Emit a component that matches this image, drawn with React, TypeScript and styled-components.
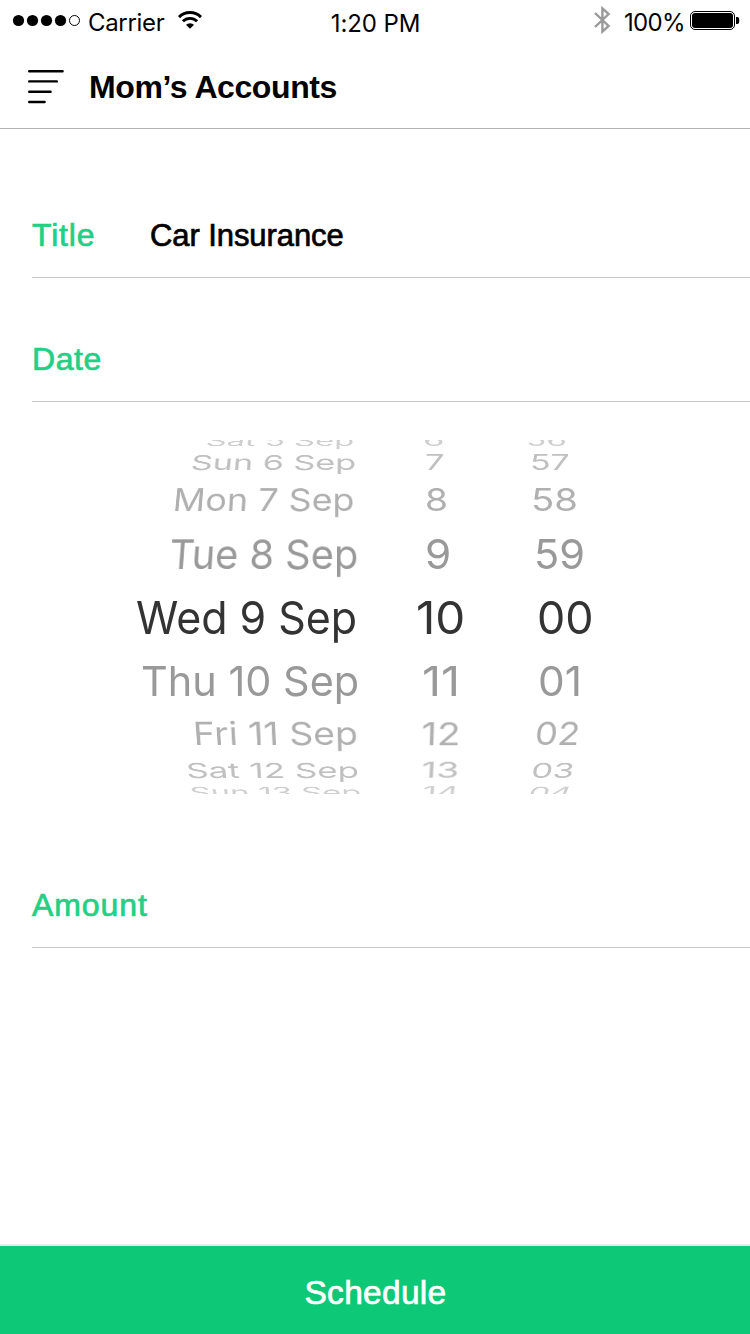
import React from "react";
import styled, { createGlobalStyle, css } from "styled-components";

const GlobalStyle = createGlobalStyle`
  * { box-sizing: border-box; }
  body { margin: 0; background: #fff; }
`;

const helvetica = css`font-family: "Liberation Sans", Helvetica, Arial, sans-serif;`;
const sanFrancisco = css`font-family: Inter, "Liberation Sans", sans-serif;`;

const Screen = styled.div`
  ${helvetica}
  display: flex;
  flex-direction: column;
  width: 750px;
  height: 1334px;
  overflow: hidden;
  background: #fff;
  color: #000;
`;

const StatusBar = styled.div`
  ${sanFrancisco}
  display: grid;
  grid-template-columns: 1fr auto 1fr;
  height: 46px;
  padding: 0 11px 0 12px;
  font-size: 24px;
  line-height: 30px;
`;

const StatusGroup = styled.div<{ $end?: boolean }>`
  display: flex;
  align-items: flex-start;
  justify-content: ${(p) => (p.$end ? "flex-end" : "flex-start")};
  margin-right: ${(p) => (p.$end ? -1 : 0)}px;
`;

const StatusText = styled.span<{ $top: number; $tracking?: number }>`
  margin-top: ${(p) => p.$top}px;
  letter-spacing: ${(p) => p.$tracking ?? 0}px;
  white-space: nowrap;
`;

const StatusIcon = styled.svg<{ $top: number; $before?: number; $after?: number }>`
  display: block;
  flex: none;
  margin: ${(p) => `${p.$top}px ${p.$after ?? 0}px 0 ${p.$before ?? 0}px`};
`;

const Header = styled.header`
  display: flex;
  align-items: flex-start;
  height: 83px;
  padding: 23px 28px 0;
  border-bottom: 1px solid #b2b2b2;
`;

const MenuIcon = styled.svg`
  display: block;
  flex: none;
  margin-right: 25px;
`;

const PageTitle = styled.h1`
  margin: 0;
  font-size: 32px;
  line-height: 36px;
  font-weight: 700;
  letter-spacing: -0.41px;
`;

const Form = styled.main`
  flex: 1;
  padding: 25px 0 0 32px;
`;

const Field = styled.div`
  display: flex;
  align-items: baseline;
  height: 124px;
  padding: 63px 0 24px;
  border-bottom: 1px solid #c8c8c8;
  line-height: 36px;
`;

const FieldLabel = styled.label<{ $tracking: number }>`
  width: 118px;
  color: #23cf85;
  font-size: 32px;
  letter-spacing: ${(p) => p.$tracking}px;
  -webkit-text-stroke: 0.7px currentColor;
`;

const FieldValue = styled.span`
  font-size: 31px;
  letter-spacing: -0.08px;
  -webkit-text-stroke: 0.7px currentColor;
`;

const Wheel = styled.div`
  ${sanFrancisco}
  height: 354px;
  margin: 38px 0 30px;
  padding-left: 98px;
  overflow: hidden;
  font-size: 45.4px;
  line-height: 46px;
`;

const WheelRow = styled.div<{ $height: number; $color: string }>`
  display: grid;
  grid-template-columns: 280px 110px 110px;
  align-items: end;
  height: ${(p) => p.$height}px;
  color: ${(p) => p.$color};
`;

const WheelCell = styled.div<{ $inset: number }>`
  display: flex;
  align-items: flex-end;
  height: 0;
  padding-left: ${(p) => p.$inset}px;
`;

const WheelText = styled.span<{ $matrix: string }>`
  flex: none;
  white-space: nowrap;
  transform-origin: 0 39px;
  transform: ${(p) => p.$matrix};
`;

const ScheduleButton = styled.button`
  ${helvetica}
  height: 90px;
  padding: 5px 0 0 1px;
  border: 0;
  border-top: 2px solid #e6ebea;
  background: #0dc977;
  color: #fff;
  font-size: 33.5px;
  line-height: 38px;
  letter-spacing: 0.3px;
  -webkit-text-stroke: 0.7px currentColor;
`;

/* text, inset from the column edge, horizontal stretch, lean at the left and right end */
type Cell = [string, number, number, number, number];
type Row = { height: number; squash: number; color: string; cells: Cell[] };

const rows: Row[] = [
  { height: 13, squash: 0.34, color: "#cfcfcf", cells: [["Sat 5 Sep", 75.4, 0.724, 0.2, 0], ["6", 12.8, 0.763, 0, 0], ["56", 5.6, 0.735, 0, 0]] },
  { height: 24, squash: 0.465, color: "#c0c0c0", cells: [["Sun 6 Sep", 59.8, 0.756, 0.15, 0], ["7", 15.2, 0.757, 0, 0], ["57", 10.2, 0.745, 0, 0]] },
  { height: 41, squash: 0.7, color: "#b0b0b0", cells: [["Mon 7 Sep", 42.2, 0.795, 0.1, 0], ["8", 15, 0.82, 0, 0], ["58", 11.3, 0.843, 0, 0]] },
  { height: 58, squash: 0.91, color: "#999", cells: [["Tue 8 Sep", 38.2, 0.88, 0.08, 0], ["9", 15.4, 0.932, 0, 0], ["59", 14.3, 0.914, 0, 0]] },
  { height: 65, squash: 1, color: "#333", cells: [["Wed 9 Sep", 6.1, 0.946, 0, 0], ["10", 6.1, 1.047, 0, 0], ["00", 17.3, 0.987, 0, 0]] },
  { height: 62, squash: 0.91, color: "#999", cells: [["Thu 10 Sep", 11, 0.913, 0, 0], ["11", 11.6, 1.03, 0, 0], ["01", 17.9, 0.935, 0, 0]] },
  { height: 49, squash: 0.7, color: "#b0b0b0", cells: [["Fri 11 Sep", 64, 0.82, -0.08, 0], ["12", 11.2, 0.85, 0.03, 0.03], ["02", 13.8, 0.79, 0.1, 0.12]] },
  { height: 33, squash: 0.46, color: "#c0c0c0", cells: [["Sat 12 Sep", 56.8, 0.766, -0.12, 0], ["13", 10.7, 0.81, 0.06, 0.06], ["03", 9.7, 0.75, 0.2, 0.22]] },
  { height: 20, squash: 0.34, color: "#cfcfcf", cells: [["Sun 13 Sep", 60.8, 0.714, -0.2, 0], ["14", 12, 0.77, 0.1, 0.1], ["04", 7, 0.73, 0.35, 0.4]] },
];

const wheelMatrix = (cell: Cell, squash: number) => {
  const [text, , stretch, leanStart, leanEnd] = cell;
  const width = text.length * 23 * stretch;
  const shear = -leanStart * squash;
  const keystone = ((leanEnd - leanStart) * squash) / width;
  return `matrix3d(${stretch},0,0,0,${shear},${squash},0,${keystone.toFixed(6)},0,0,1,0,0,0,0,1)`;
};

export default function App() {
  return (
    <>
      <GlobalStyle />
      <Screen>
        <StatusBar>
          <StatusGroup>
            <StatusIcon $top={14} $after={7} width="69" height="13" viewBox="0 0 69 13">
              {[6.5, 20.5, 34.5, 48.5].map((x) => (
                <circle key={x} cx={x} cy="6.5" r="5.6" />
              ))}
              <circle cx="62.5" cy="6.5" r="5" fill="none" stroke="#000" strokeWidth="1" />
            </StatusIcon>
            <StatusText $top={8} $tracking={-0.32}>Carrier</StatusText>
            <StatusIcon $top={11} $before={14} width="24" height="18" viewBox="0 0 24 18">
              <g fill="none" stroke="#000" strokeWidth="2.9">
                <path d="M1 6.1a15.6 15.6 0 0 1 22 0" />
                <path d="M4.9 10.3a10 10 0 0 1 14.2 0" />
              </g>
              <path d="M12 17.8l-4-4a5.7 5.7 0 0 1 8 0z" />
            </StatusIcon>
          </StatusGroup>
          <StatusText $top={9} $tracking={-0.1}>1:20 PM</StatusText>
          <StatusGroup $end>
            <StatusIcon $top={6} $after={13} width="18" height="28" viewBox="0 0 18 28">
              <path d="M2 7L15.6 20l-6.2 5.6V2.4L15.6 8 2 21" fill="none" stroke="#999" strokeWidth="2.4" />
            </StatusIcon>
            <StatusText $top={8} $tracking={-0.65}>100%</StatusText>
            <StatusIcon $top={11} $before={5} width="50" height="19" viewBox="0 0 50 19">
              <rect x="0.5" y="0.5" width="44" height="18" rx="4.5" fill="none" stroke="#000" />
              <rect x="2" y="2" width="41" height="15" rx="3" />
              <path d="M46 6h1.2a2 2 0 0 1 2 2v3a2 2 0 0 1-2 2H46z" />
            </StatusIcon>
          </StatusGroup>
        </StatusBar>

        <Header>
          <MenuIcon width="36" height="36" viewBox="0 0 36 36" stroke="#000" strokeWidth="2.4" strokeLinecap="round">
            <path d="M1.2 2.3h33.4M1.2 12.4h27.6M1.2 22.7h21.4M1.2 33h15.4" />
          </MenuIcon>
          <PageTitle>Mom’s Accounts</PageTitle>
        </Header>

        <Form>
          <Field>
            <FieldLabel $tracking={0.8}>Title</FieldLabel>
            <FieldValue>Car Insurance</FieldValue>
          </Field>
          <Field>
            <FieldLabel $tracking={0.6}>Date</FieldLabel>
          </Field>
          <Wheel>
            {rows.map((row) => (
              <WheelRow key={row.cells[0][0]} $height={row.height} $color={row.color}>
                {row.cells.map((cell) => (
                  <WheelCell key={cell[0]} $inset={cell[1]}>
                    <WheelText $matrix={wheelMatrix(cell, row.squash)}>{cell[0]}</WheelText>
                  </WheelCell>
                ))}
              </WheelRow>
            ))}
          </Wheel>
          <Field>
            <FieldLabel $tracking={0.9}>Amount</FieldLabel>
          </Field>
        </Form>

        <ScheduleButton>Schedule</ScheduleButton>
      </Screen>
    </>
  );
}
